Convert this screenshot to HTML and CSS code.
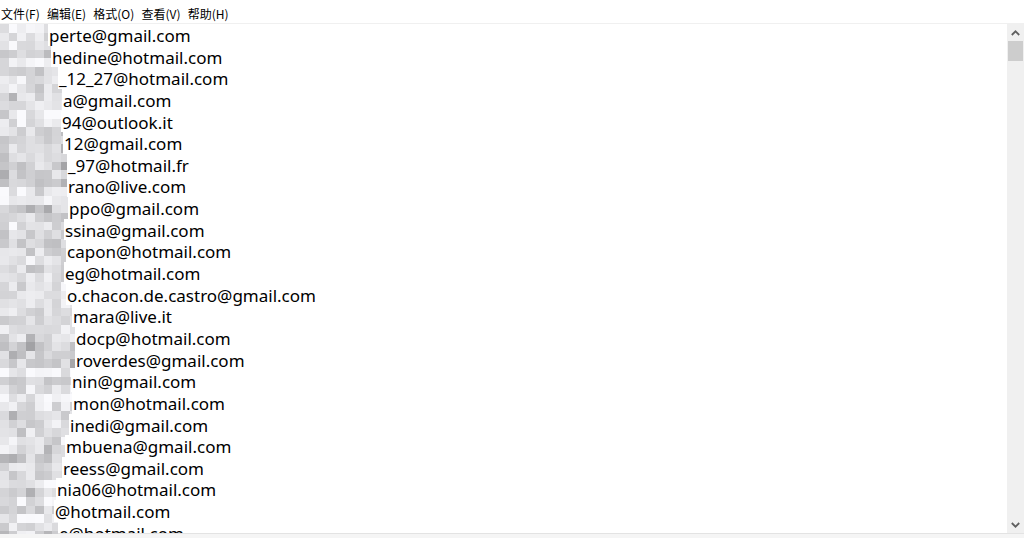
FILE: index.html
```html
<!DOCTYPE html>
<html lang="zh-CN">
<head>
<meta charset="utf-8">
<title>无标题 - 记事本</title>
<link rel="stylesheet" href="styles.css">
</head>
<body>
<div class="window">
  <nav class="menubar">
    <span class="menu">文件(F)</span>
    <span class="menu">编辑(E)</span>
    <span class="menu">格式(O)</span>
    <span class="menu">查看(V)</span>
    <span class="menu">帮助(H)</span>
  </nav>
  <div class="editor">
    <div class="text">
      <div class="line" style="--x:49px">perte@gmail.com</div>
      <div class="line" style="--x:52px">hedine@hotmail.com</div>
      <div class="line" style="--x:59px">_12_27@hotmail.com</div>
      <div class="line" style="--x:63px">a@gmail.com</div>
      <div class="line" style="--x:62px">94@outlook.it</div>
      <div class="line" style="--x:64px">12@gmail.com</div>
      <div class="line" style="--x:68px">_97@hotmail.fr</div>
      <div class="line" style="--x:68px">rano@live.com</div>
      <div class="line" style="--x:69px">ppo@gmail.com</div>
      <div class="line" style="--x:65px">ssina@gmail.com</div>
      <div class="line" style="--x:67px">capon@hotmail.com</div>
      <div class="line" style="--x:65px">eg@hotmail.com</div>
      <div class="line" style="--x:67px">o.chacon.de.castro@gmail.com</div>
      <div class="line" style="--x:73px">mara@live.it</div>
      <div class="line" style="--x:76px">docp@hotmail.com</div>
      <div class="line" style="--x:76px">roverdes@gmail.com</div>
      <div class="line" style="--x:72px">nin@gmail.com</div>
      <div class="line" style="--x:73px">mon@hotmail.com</div>
      <div class="line" style="--x:70px">inedi@gmail.com</div>
      <div class="line" style="--x:66px">mbuena@gmail.com</div>
      <div class="line" style="--x:63px">reess@gmail.com</div>
      <div class="line" style="--x:57px">nia06@hotmail.com</div>
      <div class="line" style="--x:55px">@hotmail.com</div>
      <div class="line" style="--x:59px">e@hotmail.com</div>
    </div>
    <canvas id="mosaic" class="mosaic" width="80" height="510"></canvas>
    <div class="vscroll">
      <div class="arrow">
        <svg width="9" height="6" viewBox="0 0 9 6"><path d="M0.8 5 L4.5 1.3 L8.2 5" fill="none" stroke="#606060" stroke-width="1.8"/></svg>
      </div>
      <div class="thumb"></div>
      <div class="track"></div>
      <div class="arrow">
        <svg width="9" height="6" viewBox="0 0 9 6"><path d="M0.8 1 L4.5 4.7 L8.2 1" fill="none" stroke="#606060" stroke-width="1.8"/></svg>
      </div>
    </div>
  </div>
  <div class="hbar"></div>
</div>
<script src="script.js"></script>
</body>
</html>
```

FILE: styles.css
```css
* { box-sizing: border-box; }
html, body { margin: 0; padding: 0; background: #fff; }
body { width: 1024px; height: 538px; overflow: hidden; }

.window {
  display: flex;
  flex-direction: column;
  height: 538px;
}

.menubar {
  display: flex;
  align-items: center;
  gap: 7.2px;
  height: 24px;
  padding: 3px 0 0 1px;
  border-bottom: 1px solid #f0f0f0;
  font-family: "Noto Sans CJK SC", "Microsoft YaHei", sans-serif;
  font-size: 12px;
  color: #000;
  background: #fff;
}

.editor {
  position: relative;
  display: flex;
  flex: 1;
  min-height: 0;
}

.text {
  flex: 1;
  overflow: hidden;
  padding-top: 1px;
  font-family: "Noto Sans", "Noto Sans CJK SC", sans-serif;
  font-size: 17px;
  line-height: 21.64px;
  color: #000;
}

.line {
  padding-left: var(--x);
  white-space: nowrap;
}

.mosaic {
  position: absolute;
  left: 0;
  top: 0;
}

.vscroll {
  width: 17px;
  display: flex;
  flex-direction: column;
  background: #f0f0f0;
}

.arrow {
  height: 17px;
  display: flex;
  align-items: center;
  justify-content: center;
}

.thumb {
  height: 20px;
  margin: 0 1px;
  background: #cdcdcd;
}

.track { flex: 1; }

.hbar {
  height: 5px;
  border-top: 1px solid #e3e3e3;
  background: #f5f5f5;
}
```

FILE: script.js
```js
(function () {
  var canvas = document.getElementById('mosaic');
  var ctx = canvas.getContext('2d');
  var lines = document.querySelectorAll('.line');
  var seed = 12345;
  function rnd() {
    seed = (seed * 1103515245 + 12345) & 0x7fffffff;
    return seed / 0x7fffffff;
  }
  var cw = 8.7, ch = 8.6;
  for (var r = 0; r * ch < canvas.height; r++) {
    var rowBase = 208 + rnd() * 32;
    for (var c = 0; c * cw < canvas.width; c++) {
      var v = rowBase + (rnd() - 0.5) * 44;
      if (rnd() < 0.1) v -= 28;
      v = Math.max(155, Math.min(250, Math.round(v)));
      var b = Math.min(255, v + 3);
      ctx.fillStyle = 'rgb(' + v + ',' + v + ',' + b + ')';
      var x0 = Math.round(c * cw), y0 = Math.round(r * ch);
      ctx.fillRect(x0, y0, Math.round((c + 1) * cw) - x0, Math.round((r + 1) * ch) - y0);
    }
  }
  var lh = 21.64;
  for (var i = 0; i < lines.length; i++) {
    var x = parseFloat(getComputedStyle(lines[i]).paddingLeft) - 1;
    var top = Math.round(i * lh), bottom = Math.round((i + 1) * lh);
    ctx.clearRect(x, top, canvas.width - x, bottom - top);
  }
})();
```
